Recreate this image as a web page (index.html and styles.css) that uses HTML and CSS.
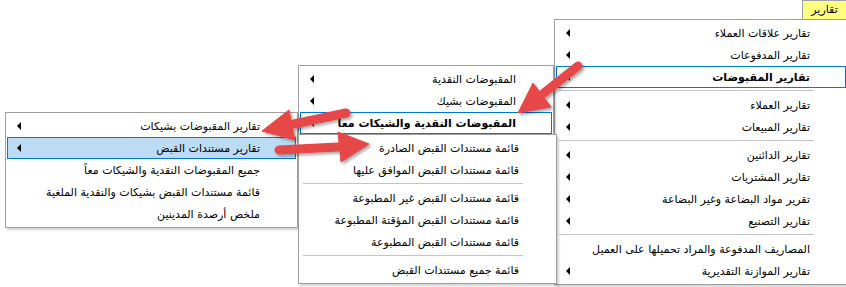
FILE: index.html
```html
<!DOCTYPE html>
<html lang="ar">
<head>
    <meta charset="UTF-8">
    <meta name="viewport" content="width=device-width, initial-scale=1.0">
    <title>تقارير</title>
    <link rel="stylesheet" href="styles.css">
</head>
<body>

    <div class="screen">

        <div class="menubar-tab" dir="rtl">تقارير</div>

        <!-- top level reports menu -->
        <ul class="menu main-menu" dir="rtl">
            <li class="item sub">تقارير علاقات العملاء</li>
            <li class="item sub">تقارير المدفوعات</li>
            <li class="item sub open">تقارير المقبوضات</li>
            <li class="sep"></li>
            <li class="item sub">تقارير العملاء</li>
            <li class="item sub">تقارير المبيعات</li>
            <li class="sep"></li>
            <li class="item sub">تقارير الدائنين</li>
            <li class="item sub">تقارير المشتريات</li>
            <li class="item sub">تقرير مواد البضاعة وغير البضاعة</li>
            <li class="item sub">تقارير التصنيع</li>
            <li class="sep"></li>
            <li class="item">المصاريف المدفوعة والمراد تحميلها على العميل</li>
            <li class="item sub">تقارير الموازنة التقديرية</li>
        </ul>

        <!-- receipts submenu -->
        <ul class="menu receipts-menu" dir="rtl">
            <li class="item sub">المقبوضات النقدية</li>
            <li class="item sub">المقبوضات بشيك</li>
            <li class="item sub open">المقبوضات النقدية والشيكات معاً</li>
            <li class="item">&nbsp;</li>
            <li class="item">&nbsp;</li>
        </ul>

        <!-- cash + cheques submenu -->
        <ul class="menu combined-menu" dir="rtl">
            <li class="item sub">تقارير المقبوضات بشيكات</li>
            <li class="item sub active">تقارير مستندات القبض</li>
            <li class="item">جميع المقبوضات النقدية والشيكات معاً</li>
            <li class="item">قائمة مستندات القبض بشيكات والنقدية الملغية</li>
            <li class="item">ملخص أرصدة المدينين</li>
        </ul>

        <!-- receipt documents submenu -->
        <ul class="menu documents-menu" dir="rtl">
            <li class="item">قائمة مستندات القبض الصادرة</li>
            <li class="item">قائمة مستندات القبض الموافق عليها</li>
            <li class="sep"></li>
            <li class="item">قائمة مستندات القبض غير المطبوعة</li>
            <li class="item">قائمة مستندات القبض المؤقتة المطبوعة</li>
            <li class="item">قائمة مستندات القبض المطبوعة</li>
            <li class="sep"></li>
            <li class="item">قائمة جميع مستندات القبض</li>
        </ul>

        <!-- red callout arrows drawn over the menus -->
        <svg class="arrows" width="846" height="287" viewBox="0 0 846 287">
            <defs>
                <filter id="shadow" x="-20%" y="-20%" width="140%" height="140%">
                    <feDropShadow dx="2" dy="2" stdDeviation="1.5" flood-color="#000" flood-opacity="0.35"/>
                </filter>
            </defs>
            <g filter="url(#shadow)" fill="#e64646" stroke="#e64646">
                <line x1="578" y1="66" x2="544" y2="93" stroke-width="9" stroke-linecap="round"/>
                <polygon points="518,113 551,107 533,83" stroke-width="1" stroke-linejoin="round"/>

                <line x1="346" y1="113" x2="294" y2="124" stroke-width="9" stroke-linecap="round"/>
                <polygon points="262,131 295,140 289,110" stroke-width="1" stroke-linejoin="round"/>

                <line x1="279" y1="150" x2="338" y2="147" stroke-width="9" stroke-linecap="round"/>
                <polygon points="369,144 341,162 338,132" stroke-width="1" stroke-linejoin="round"/>
            </g>
        </svg>

    </div>

</body>
</html>
```

FILE: styles.css
```css
body {
    margin: 0;
    background: #ffffff;
    font-family: "DejaVu Sans", Tahoma, sans-serif;
    font-size: 11px;
    color: #000;
}

.screen {
    position: relative;
    width: 846px;
    height: 287px;
    overflow: hidden;
}

/* yellow menu bar entry */
.menubar-tab {
    position: absolute;
    top: 0;
    left: 802px;
    width: 44px;
    height: 19px;
    box-sizing: border-box;
    background: #ffff80;
    border-left: 1px solid #a0a0a0;
    border-top: 1px solid #a0a0a0;
    text-align: center;
    line-height: 18px;
}

/* popup menus float over the window, so they sit at their own spot */
.menu {
    position: absolute;
    margin: 0;
    padding: 2px 1px;
    list-style: none;
    box-sizing: border-box;
    border: 1px solid #a0a0a0;
    background: #ffffff;
    box-shadow: 2px 2px 2px rgba(0, 0, 0, 0.18);
}

.main-menu {
    left: 554px;
    top: 19px;
    width: 294px;
    z-index: 1;
}

.receipts-menu {
    left: 298px;
    top: 65px;
    width: 256px;
    z-index: 2;
}

.combined-menu {
    left: 5px;
    top: 112px;
    width: 293px;
    z-index: 3;
}

.documents-menu {
    left: 298px;
    top: 134px;
    width: 259px;
    z-index: 4;
}

.item {
    display: flex;
    align-items: center;
    height: 22px;
    box-sizing: border-box;
    padding: 0 35px 0 9px;
    white-space: nowrap;
    border: 1px solid transparent;
}

/* submenu triangle at the far (left) end */
.item.sub::after {
    content: "";
    margin-right: auto;
    border-top: 4px solid transparent;
    border-bottom: 4px solid transparent;
    border-right: 4px solid #000;
}

.item.open {
    border-color: #0078d7;
    background: #ffffff;
    font-weight: bold;
}

.item.active {
    border-color: #0078d7;
    background: #bcdcf4;
}

.sep {
    height: 1px;
    margin: 2px 32px 3px 3px;
    background: #c4c4c4;
}

.arrows {
    position: absolute;
    top: 0;
    left: 0;
    z-index: 10;
    pointer-events: none;
}
```
